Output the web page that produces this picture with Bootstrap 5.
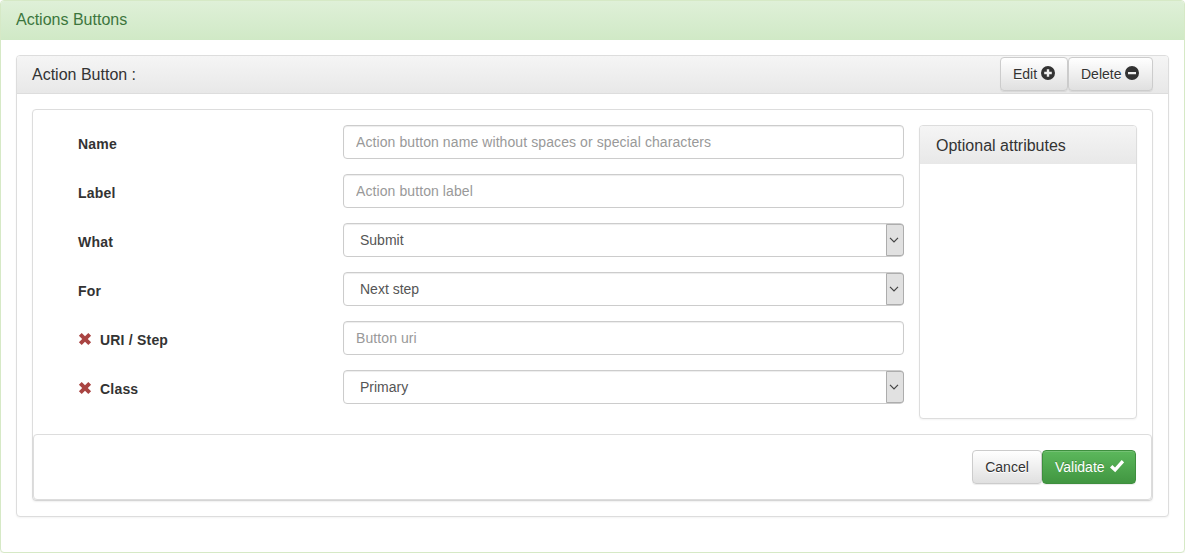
<!DOCTYPE html>
<html lang="en">
<head>
<meta charset="utf-8">
<title>Actions Buttons</title>
<link href="https://cdn.jsdelivr.net/npm/bootstrap@5.3.0/dist/css/bootstrap.min.css" rel="stylesheet">
<script src="https://cdn.jsdelivr.net/npm/bootstrap@5.3.0/dist/js/bootstrap.bundle.min.js"></script>
<style>
body{font-family:"Liberation Sans",Arial,sans-serif;font-size:14px;line-height:20px;color:#333;background:#fff}
.panel{border:1px solid #ddd;border-radius:4px;box-shadow:0 1px 2px rgba(0,0,0,.05);background:#fff}
.panel-success{border-color:#d6e9c6;height:553px}
.panel-head{font-size:16px;line-height:18px;padding:10px 15px;background:linear-gradient(#f5f5f5,#e8e8e8);border-radius:3px 3px 0 0;height:38px}
.panel-success>.panel-head{background:linear-gradient(#dff0d8,#d0e9c6);color:#3c763d;height:39px}
.ruled{border-bottom:1px solid #ddd}
.pad{padding:15px}
.btn{--bs-btn-font-size:14px;--bs-btn-line-height:20px;--bs-btn-padding-x:12px;--bs-btn-padding-y:6px;--bs-btn-border-radius:4px;height:34px;white-space:nowrap}
.btn svg{width:14px;height:14px;fill:currentColor;display:block;flex-shrink:0;margin:-2px -2px 0 4px}
.btn-valid svg{margin-left:5px}
.btn-plain{--bs-btn-color:#333;border-color:#ccc;background:linear-gradient(#fff,#e0e0e0);text-shadow:0 1px 0 #fff;box-shadow:inset 0 1px 0 rgba(255,255,255,.15),0 1px 1px rgba(0,0,0,.075)}
.btn-valid{--bs-btn-color:#fff;border-color:#3e8f3e;background:linear-gradient(#5cb85c,#419641);text-shadow:0 -1px 0 rgba(0,0,0,.2);box-shadow:inset 0 1px 0 rgba(255,255,255,.15),0 1px 1px rgba(0,0,0,.075)}
.w-edit{width:68px}.w-delete{width:85px}.w-cancel{width:70px}.w-valid{width:94px}
.head-actions{margin:-9px 0 0}
.fields{width:856px;gap:15px}
.field-label{width:295px;padding:9px 0 0 30px;font-weight:700;line-height:20px;letter-spacing:.2px}
.field-label svg{width:14px;height:14px;margin-right:8px;fill:#a94442;position:relative;top:-2px}
.form-control{height:34px;font-size:14px;line-height:20px;padding:6px 12px;color:#555;border:1px solid #ccc;border-radius:4px;box-shadow:inset 0 1px 1px rgba(0,0,0,.075)}
.form-control::placeholder{color:#999;opacity:1;letter-spacing:.09px}
.picker{padding:0 0 0 12px}
.picker select{appearance:none;border:0;background:none;color:#555;padding:0 4px;outline:0;height:32px}
.arrow{width:18px;margin-right:-1px;padding-right:1px;background:#e1e1e1;border:1px solid #adadad;border-radius:0 3px 3px 0}
.arrow svg{flex-shrink:0;margin-right:1px}
.optional{width:218px;height:294px}
.optional .panel-head{padding:11px 15px 9px 16px}
</style>
</head>
<body>
<main class="panel panel-success">
  <div class="panel-head">Actions Buttons</div>
  <div class="pad">
    <section class="panel">
      <div class="panel-head ruled d-flex justify-content-between">
        <span>Action Button :</span>
        <div class="head-actions d-flex">
          <button class="btn btn-plain w-edit d-flex align-items-center">Edit <svg viewBox="0 0 14 14"><path fill-rule="evenodd" d="M7 0a7 7 0 1 0 0 14A7 7 0 0 0 7 0ZM5.800 3.200h2.400v2.600h2.600v2.400H8.200v2.600H5.800V8.200H3.200V5.800h2.600Z"/></svg></button>
          <button class="btn btn-plain w-delete d-flex align-items-center">Delete <svg viewBox="0 0 14 14"><path fill-rule="evenodd" d="M7 0a7 7 0 1 0 0 14A7 7 0 0 0 7 0ZM3 6h8v2.200H3Z"/></svg></button>
        </div>
      </div>
      <div class="pad">
        <div class="panel">
          <div class="pad d-flex justify-content-between">
            <form class="fields d-flex flex-column">
              <div class="d-flex"><label class="field-label flex-shrink-0">Name</label><input class="form-control" placeholder="Action button name without spaces or special characters"></div>
              <div class="d-flex"><label class="field-label flex-shrink-0">Label</label><input class="form-control" placeholder="Action button label"></div>
              <div class="d-flex"><label class="field-label flex-shrink-0">What</label><div class="form-control picker d-flex"><select class="flex-grow-1"><option>Submit</option></select><span class="arrow d-flex align-items-center justify-content-center"><svg width="10" height="6" viewBox="0 0 10 6" fill="none" stroke="#444" stroke-width="1.2"><path d="M1 .8 5 4.800 9 .8"/></svg></span></div></div>
              <div class="d-flex"><label class="field-label flex-shrink-0">For</label><div class="form-control picker d-flex"><select class="flex-grow-1"><option>Next step</option></select><span class="arrow d-flex align-items-center justify-content-center"><svg width="10" height="6" viewBox="0 0 10 6" fill="none" stroke="#444" stroke-width="1.2"><path d="M1 .8 5 4.800 9 .8"/></svg></span></div></div>
              <div class="d-flex"><label class="field-label flex-shrink-0"><svg viewBox="0 0 14 14"><path d="M3.700.900 7 4.200l3.300-3.300 2.800 2.800L9.800 7l3.300 3.300-2.800 2.800L7 9.800l-3.300 3.300L.900 10.300 4.200 7 .900 3.700Z"/></svg>URI / Step</label><input class="form-control" placeholder="Button uri"></div>
              <div class="d-flex"><label class="field-label flex-shrink-0"><svg viewBox="0 0 14 14"><path d="M3.700.900 7 4.200l3.300-3.300 2.800 2.800L9.800 7l3.300 3.300-2.800 2.800L7 9.800l-3.300 3.300L.900 10.300 4.200 7 .900 3.700Z"/></svg>Class</label><div class="form-control picker d-flex"><select class="flex-grow-1"><option>Primary</option></select><span class="arrow d-flex align-items-center justify-content-center"><svg width="10" height="6" viewBox="0 0 10 6" fill="none" stroke="#444" stroke-width="1.2"><path d="M1 .8 5 4.800 9 .8"/></svg></span></div></div>
            </form>
            <aside class="panel optional flex-shrink-0"><div class="panel-head">Optional attributes</div></aside>
          </div>
          <div class="panel pad d-flex justify-content-end">
            <button class="btn btn-plain w-cancel">Cancel</button>
            <button class="btn btn-valid w-valid d-flex align-items-center">Validate <svg viewBox="0 0 14 14"><path d="M0 8.500 2.400 6 5 8.400 11.700 1 14.200 3.400 5.200 13.300Z"/></svg></button>
          </div>
        </div>
      </div>
    </section>
  </div>
</main>
</body>
</html>
